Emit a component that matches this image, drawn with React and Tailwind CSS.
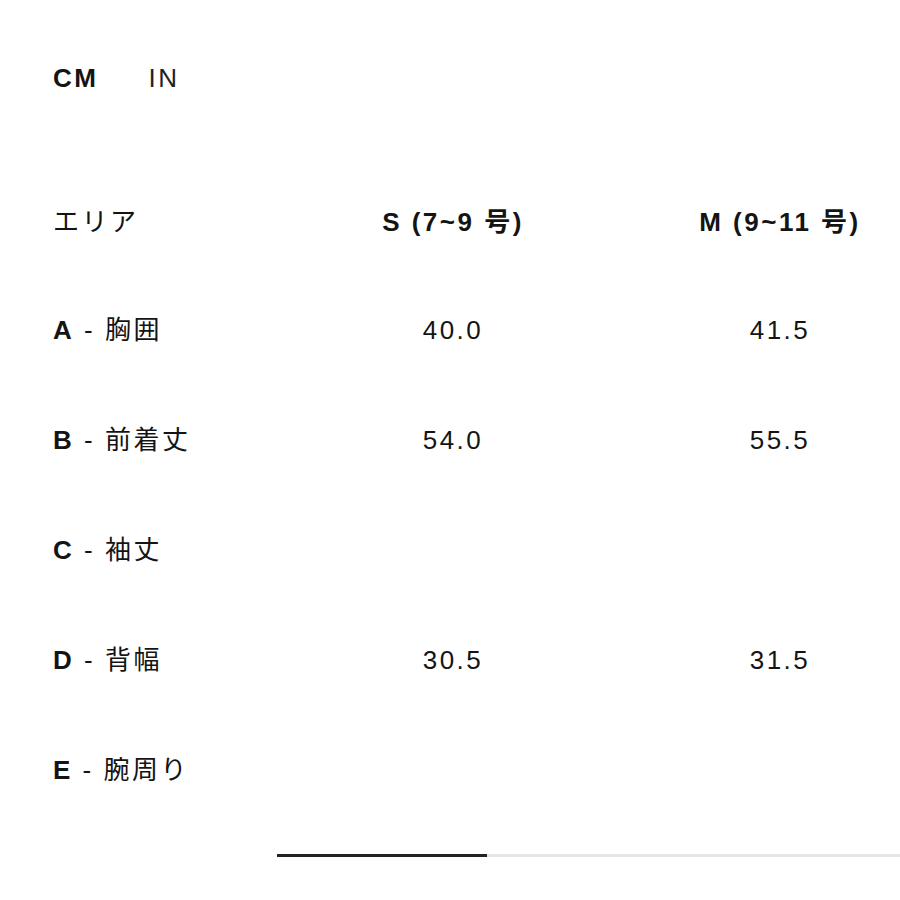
export default function App() {
  const rows = [
    { k: "A", label: "胸囲", s: "40.0", m: "41.5" },
    { k: "B", label: "前着丈", s: "54.0", m: "55.5" },
    { k: "C", label: "袖丈", s: "", m: "" },
    { k: "D", label: "背幅", s: "30.5", m: "31.5" },
    { k: "E", label: "腕周り", s: "", m: "" },
  ]

  return (
    <div
      className="w-[900px] h-[900px] bg-white overflow-hidden text-[#141414]"
      style={{ fontFamily: '"Liberation Sans", "Noto Sans CJK JP", sans-serif' }}
    >
      {/* unit toggle */}
      <div className="flex items-center pl-[53px] pt-[63px] h-[93px] text-[26px] leading-[30px] tracking-[2.5px]">
        <span className="font-bold">CM</span>
        <span className="ml-[50px] text-[#222]">IN</span>
      </div>

      {/* size table */}
      <div className="mt-[76px] pl-[53px] text-[26px] tracking-[2.5px]">
        <div className="grid grid-cols-[237px_326px_328px] h-[106px] items-center">
          <div>エリア</div>
          <div className="text-center font-bold">S (7~9 号)</div>
          <div className="text-center font-bold">M (9~11 号)</div>
        </div>
        {rows.map((r) => (
          <div key={r.k} className="grid grid-cols-[237px_326px_328px] h-[110px] items-center">
            <div>
              <span className="font-bold">{r.k}</span>
              <span> - {r.label}</span>
            </div>
            <div className="text-center">{r.s}</div>
            <div className="text-center">{r.m}</div>
          </div>
        ))}
      </div>

      {/* scroll indicator */}
      <div className="flex mt-[29px] ml-[277px]">
        <div className="w-[210px] h-[3px] bg-[#222]" />
        <div className="flex-1 h-[3px] bg-[#e6e6e6]" />
      </div>
    </div>
  )
}
